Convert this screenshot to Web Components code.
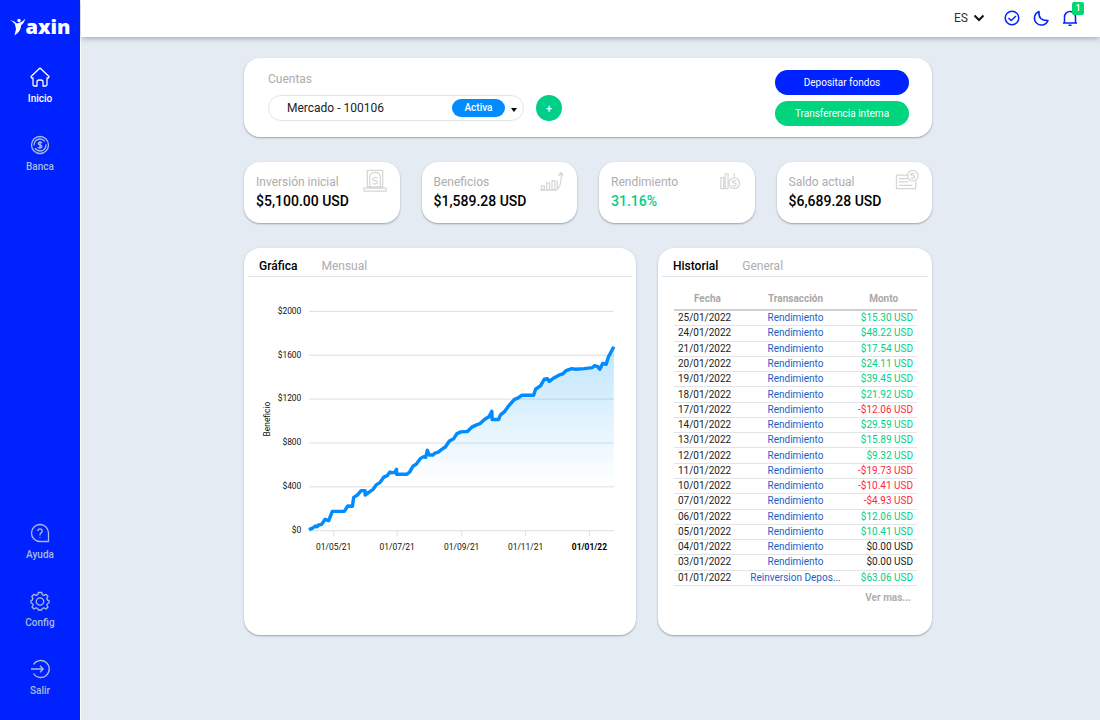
<!DOCTYPE html>
<html lang="es">
<head>
<meta charset="utf-8">
<meta name="viewport" content="width=device-width, initial-scale=1">
<title>Yaxin</title>
<style>
  :root {
    --blue: #0022ff;
    --sky: #008cff;
    --green: #00cf87;
    --red: #ff1f3c;
    --muted: #adadad;
    --line: #e2e5e8;
    --shadow: 0 1px 2px rgba(40, 50, 70, .4);
  }
  html, body { margin: 0; min-height: 100vh; }
  body { background: #e4ebf3; color: #000; font-family: Roboto, "Noto Sans", sans-serif; }
</style>
</head>
<body>
<yx-app>
  <yx-sidebar slot="side">
    <yx-nav-item icon="home" active>Inicio</yx-nav-item>
    <yx-nav-item icon="coin">Banca</yx-nav-item>
    <yx-nav-item slot="bottom" icon="help">Ayuda</yx-nav-item>
    <yx-nav-item slot="bottom" icon="gear">Config</yx-nav-item>
    <yx-nav-item slot="bottom" icon="exit">Salir</yx-nav-item>
  </yx-sidebar>
  <yx-topbar slot="top"></yx-topbar>
  <yx-account></yx-account>
  <yx-stats>
    <yx-stat label="Inversión inicial" icon="safe">$5,100.00 USD</yx-stat>
    <yx-stat label="Beneficios" icon="growth">$1,589.28 USD</yx-stat>
    <yx-stat label="Rendimiento" icon="yield" positive>31.16%</yx-stat>
    <yx-stat label="Saldo actual" icon="balance">$6,689.28 USD</yx-stat>
  </yx-stats>
  <yx-panels>
    <yx-panel tabs="Gráfica,Mensual"><yx-chart></yx-chart></yx-panel>
    <yx-panel tabs="Historial,General"><yx-history></yx-history></yx-panel>
  </yx-panels>
</yx-app>

<script>
const ICONS = {
  home: '<path d="M2 10.5 11 2l9 8.500-.6 1.500H18v6.500q0 1.500-1.500 1.500h-2.500v-4q0-2-2-2h-2q-2 0-2 2v4H5.500Q4 20 4 18.500V12H2.600z"/>',
  coin: '<circle cx="11" cy="11" r="8.500"/><circle cx="11" cy="11" r="6" stroke-dasharray="15 3"/><path d="M13 9.200Q12.600 8.200 11 8.200T9.200 9.600Q9.200 10.700 11 11t1.900 1.500Q12.800 13.900 11 13.900T9 12.800M11 7v8.200"/>',
  help: '<path d="M19.500 19.500H11A8.500 8.500 0 1 1 19.500 11z"/><path d="M8.800 9Q9 6.800 11 6.800T13.200 9Q13.200 10.200 12 11t-1 2.300M11 15v.8"/>',
  gear: '<path d="m9.300 2.500-.6 2.200-1.700.7-2-1.100L2.800 6.500l1.100 2-.7 1.700-1.200.3v2.500l1.500.5.700 1.500-1.200 2L5 19l2-1.200 1.700.7.6 1.500h3.400l.6-1.500 1.700-.7L17 19l2-2-1.200-2 .7-1.500 1.500-.5v-2.500l-1.500-.3-.7-1.700 1.100-2L17 4.300l-2 1.100-1.700-.7-.6-2.200z"/><circle cx="11" cy="11.500" r="3.700"/>',
  exit: '<path d="M4.500 6.500a8.500 8.500 0 1 1 0 9M2 11h12M11 7.800l3.200 3.200-3.200 3.200"/>',
  safe: '<path d="M4.500 20V1.500h16V20M1 20h23v3H1zM7 19V9q0-5.500 5.500-5.500T18 9v10M4 18.500h17"/><path d="M15 9.500q-2.500-1.700-4.500 0t2 2.600 2 2.900q-2 1.300-4.500 0"/>',
  growth: '<path d="M1.500 21.500v-4h3v4zM7 21.500v-7h3v7zM12.500 21.500V12h3v9.500zM0 22h17q6-4 5-18m-3 3 3-3.500L24 7M18 12v8"/>',
  yield: '<path d="M3 20.500V9h3v11.500zM7.500 20.500V5h3v15.500zM17 8V4.500"/><circle cx="17" cy="14.800" r="5.500"/><path d="M19 12.800q-2-1.300-3.500 0t1.500 2 1.300 2.200-3.500 0"/>',
  balance: '<path d="M14 6.500H1.500v14h20V13M4 10h9M4 13.500h10M4 17h14"/><circle cx="18.500" cy="7" r="5.500"/><path d="M20.500 5q-2-1.300-3.500 0t1.500 2 1.300 2.200-3.500 0"/>'
};
const svg = (name, size, box) =>
  `<svg width="${size}" height="${size}" viewBox="0 0 ${box} ${box}" fill="none" stroke="currentColor" stroke-width="1.300" stroke-linejoin="round" aria-hidden="true">${ICONS[name]}</svg>`;

/* Base element: renders view() and styles() into an open shadow root. */
class Element extends HTMLElement {
  connectedCallback() {
    if (this.shadowRoot) return;
    const t = document.createElement('template');
    t.innerHTML = `<style>:host,*{box-sizing:border-box}button,select{font:inherit;color:inherit;border:0;background:none;padding:0;margin:0;cursor:pointer}a{color:inherit;text-decoration:none}svg{display:block}${this.styles()}</style>${this.view()}`;
    this.attachShadow({ mode: 'open' }).append(t.content.cloneNode(true));
  }
}

class App extends Element {
  styles() { return `
    :host { display: grid; grid-template-columns: 81px 1fr; min-height: 100vh; }
    .page { display: flex; flex-direction: column; min-width: 0; }
    main { display: grid; gap: 25px; padding: 21px 168px 24px 163px; }
    @media (max-width: 900px) { main { padding: 21px 24px; } }`; }
  view() { return `<slot name="side"></slot><div class="page"><slot name="top"></slot><main><slot></slot></main></div>`; }
}

class Sidebar extends Element {
  styles() { return `
    :host { display: flex; flex-direction: column; background: var(--blue); border-right: 1px solid #fff; padding: 14px 0 4px; }
    .logo { display: flex; align-items: center; justify-content: center; color: #fff; font: 800 20px/26px "Open Sans", sans-serif; }
    nav { flex: 1; display: flex; flex-direction: column; padding-top: 16px; }
    .bottom { margin-top: auto; }`; }
  view() { return `
    <a class="logo" href="#" aria-label="Yaxin">
      <svg width="16" height="18" viewBox="0 0 16 18" fill="#fff" aria-hidden="true">
        <circle cx="9" cy="2.500" r="1.700"/>
        <path d="M0 2q4 .7 7 3.500Q12 4.500 15.500.7 14 5 11 7.500q.3 5.500-6.500 10L6 11Q5.500 8 4.800 6 3 3.500 0 2z"/>
      </svg>axin</a>
    <nav><slot></slot><div class="bottom"><slot name="bottom"></slot></div></nav>`; }
}

class NavItem extends Element {
  styles() { return `
    :host { display: block; color: #a9bcdc; }
    :host([active]) { color: #fff; }
    a { display: flex; flex-direction: column; align-items: center; gap: 4px; height: 68px; padding-top: 10px; font-size: 10px; line-height: 14px; font-weight: 500; }`; }
  view() { return `<a href="#">${svg(this.getAttribute('icon'), 22, 22)}<slot></slot></a>`; }
}

class Topbar extends Element {
  styles() { return `
    :host { display: block; background: #fff; box-shadow: 0 1px 6px rgba(40,50,70,.4); }
    header { display: flex; align-items: center; justify-content: flex-end; height: 37px; padding: 0 20px 2px 0; gap: 9px; color: var(--blue); }
    .lang { display: flex; align-items: center; gap: 3px; color: #333; font-size: 12px; margin-right: 8px; }
    select { appearance: none; width: 16px; line-height: 16px; }
    .bell { position: relative; }
    .badge { position: absolute; right: -4px; top: -6px; width: 12px; height: 13px; border-radius: 2px; background: #00d672; color: #fff; font: 500 9px/13px Roboto, sans-serif; text-align: center; }`; }
  view() { return `
    <header>
      <label class="lang"><select aria-label="Idioma"><option>ES</option><option>EN</option></select>
        <svg width="12" height="12" viewBox="0 0 12 12" fill="none" stroke="#111" stroke-width="2" aria-hidden="true"><path d="m1.500 3.500 4.500 4.500 4.500-4.500"/></svg></label>
      <button aria-label="Verificación"><svg width="20" height="20" viewBox="0 0 20 20" fill="none" stroke="currentColor" stroke-width="1.500"><circle cx="10" cy="10" r="6.800"/><path d="m6.500 10 2.700 2.500L14 8"/></svg></button>
      <button aria-label="Modo oscuro"><svg width="20" height="20" viewBox="0 0 20 20" fill="none" stroke="currentColor" stroke-width="1.500" stroke-linejoin="round"><path d="M8 3.500Q7 13 17 12.500A7 7 0 1 1 8 3.500z"/></svg></button>
      <button class="bell" aria-label="Notificaciones"><svg width="20" height="20" viewBox="0 0 20 20" fill="none" stroke="currentColor" stroke-width="1.500"><path d="M3 15h14M4.500 15V9a5.500 5.500 0 0 1 11 0v6M8.500 17.300h3"/></svg><span class="badge">1</span></button>
    </header>`; }
}

class Account extends Element {
  styles() { return `
    :host { display: flex; justify-content: space-between; align-items: flex-start; flex-wrap: wrap; gap: 12px; padding: 12px 23px 11px 24px; background: #fff; border-radius: 16px; box-shadow: var(--shadow); }
    .title { display: block; color: var(--muted); font-size: 12px; line-height: 18px; margin-bottom: 7px; }
    .row { display: flex; gap: 12px; align-items: center; }
    .field { display: flex; align-items: center; gap: 6px; width: 256px; height: 26px; padding: 0 6px 0 18px; border: 1px solid var(--line); border-radius: 13px; }
    select { appearance: none; flex: 1; min-width: 0; font-size: 12px; line-height: 16px; color: #222; }
    .pill { width: 53px; border-radius: 9px; background: var(--sky); color: #fff; font-size: 10px; line-height: 18px; text-align: center; font-weight: 500; }
    .caret { border: 3px solid transparent; border-top: 4px solid #000; border-bottom: 0; margin-top: 4px; }
    .add { width: 26px; height: 26px; border-radius: 50%; background: var(--green); color: #fff; font-size: 10px; font-weight: 500; }
    .actions { display: grid; gap: 6px; width: 134px; }
    .actions button { height: 25px; border-radius: 13px; background: var(--blue); color: #fff; font-size: 10px; }
    .actions button + button { background: #00d47c; }`; }
  view() { return `
    <div>
      <label class="title" for="acc">Cuentas</label>
      <div class="row">
        <div class="field"><select id="acc"><option>Mercado - 100106</option></select><span class="pill">Activa</span><span class="caret"></span></div>
        <button class="add" aria-label="Agregar cuenta">+</button>
      </div>
    </div>
    <div class="actions"><button>Depositar fondos</button><button>Transferencia interna</button></div>`; }
}

class Stats extends Element {
  styles() { return `:host { display: grid; grid-template-columns: repeat(auto-fit, minmax(140px, 1fr)); gap: 22px; }`; }
  view() { return `<slot></slot>`; }
}

class Stat extends Element {
  styles() { return `
    :host { display: flex; justify-content: space-between; min-height: 61px; padding: 7px 13px 7px 12px; background: #fff; border-radius: 16px; box-shadow: var(--shadow); }
    .text { padding-top: 4px; white-space: nowrap; }
    .label { color: var(--muted); font-size: 12px; line-height: 18px; }
    .value { font-size: 14px; line-height: 20px; font-weight: 500; }
    :host([positive]) .value { color: var(--green); }
    svg { color: #d6d6d6; }`; }
  view() { return `<div class="text"><div class="label">${this.getAttribute('label')}</div><div class="value"><slot></slot></div></div>${svg(this.getAttribute('icon'), 24, 25)}`; }
}

class Panels extends Element {
  styles() { return `
    :host { display: grid; grid-template-columns: 392fr 274fr; gap: 22px; }
    @media (max-width: 900px) { :host { grid-template-columns: 1fr; } }`; }
  view() { return `<slot></slot>`; }
}

class Panel extends Element {
  styles() { return `
    :host { display: block; min-width: 0; min-height: 387px; background: #fff; border-radius: 16px; box-shadow: var(--shadow); }
    .tabs { display: flex; gap: 24px; margin: 0 4px; padding: 8px 11px 0; height: 29px; border-bottom: 1px solid var(--line); font-size: 12px; line-height: 20px; color: var(--muted); }
    .tabs button { height: 20px; }
    [aria-selected=true] { color: #000; font-weight: 500; }`; }
  view() {
    const tabs = this.getAttribute('tabs').split(',');
    return `<div class="tabs" role="tablist">${tabs.map((t, i) => `<button role="tab" aria-selected="${i === 0}">${t}</button>`).join('')}</div><slot></slot>`;
  }
}

/* Profit over time: [position along the date axis, profit in USD] */
const PROFIT = [[207,9],[218,24],[227,43],[231,36],[236,52],[245,58],[255,103],[266,91],[277,176],[313,176],[323,225],[337,222],[341,304],[352,325],[363,365],[375,365],[375,325],[386,350],[398,374],[409,420],[419,438],[430,486],[441,502],[449,535],[454,529],[463,532],[469,559],[469,514],[500,514],[508,535],[519,590],[528,605],[540,657],[550,675],[556,669],[561,733],[567,690],[578,690],[584,708],[594,717],[603,739],[615,763],[627,818],[640,839],[649,883],[661,901],[681,904],[694,944],[708,965],[719,977],[733,1016],[746,1041],[754,1089],[755,1013],[774,1013],[780,1056],[792,1086],[802,1129],[821,1195],[833,1211],[843,1235],[879,1235],[885,1290],[900,1323],[911,1381],[920,1387],[926,1362],[938,1390],[956,1420],[966,1429],[976,1460],[993,1478],[1005,1472],[1030,1478],[1055,1487],[1061,1505],[1071,1496],[1077,1472],[1086,1526],[1096,1517],[1103,1587],[1119,1678]];

class Chart extends Element {
  styles() { return `
    :host { display: block; }
    svg { width: 100%; height: auto; }
    text { font: 11px Roboto, sans-serif; fill: #111; }
    .grid { stroke: #dcdfe1; stroke-width: 1.300; }`; }
  view() {
    const L = 85, R = 484, T = 45, B = 332;
    const x = p => L + (p - 207) / (1119 - 207) * (R - L);
    const y = v => B - v / 2000 * (B - T);
    const line = PROFIT.map(([p, v], i) => `${i ? 'L' : 'M'}${x(p).toFixed(1)} ${y(v).toFixed(1)}`).join('');
    const rows = [2000, 1600, 1200, 800, 400, 0].map(v =>
      `<path class="grid" d="M${L} ${y(v)}H${R}"/><text x="75" y="${y(v) + 3}" text-anchor="end">$${v}</text>`).join('');
    const cols = [['01/05/21', 281], ['01/07/21', 471], ['01/09/21', 664], ['01/11/21', 855], ['01/01/22', 1046]].map(([d, p], i) =>
      `<path class="grid" d="M${x(p)} ${B}v7"/><text x="${x(p)}" y="357" text-anchor="middle"${i === 4 ? ' style="font-weight:700;fill:#000"' : ''}>${d}</text>`).join('');
    return `<svg viewBox="0 0 513 420" role="img" aria-label="Beneficio por fecha">
      <defs><linearGradient id="fill" gradientUnits="userSpaceOnUse" x1="0" y1="${y(1700)}" x2="0" y2="${y(420)}"><stop offset="0" stop-color="#0099f5" stop-opacity=".26"/><stop offset="1" stop-color="#0099f5" stop-opacity="0"/></linearGradient></defs>
      ${rows}${cols}
      <path d="${line}V${B}H${L}z" fill="url(#fill)"/>
      <path d="${line}" fill="none" stroke="#008cff" stroke-width="4.500" stroke-linejoin="round"/>
      <text transform="translate(34 186) rotate(-90)" text-anchor="middle">Beneficio</text>
    </svg>`;
  }
}

const HISTORY = [['25/01/2022', 15.30], ['24/01/2022', 48.22], ['21/01/2022', 17.54], ['20/01/2022', 24.11], ['19/01/2022', 39.45], ['18/01/2022', 21.92], ['17/01/2022', -12.06], ['14/01/2022', 29.59], ['13/01/2022', 15.89], ['12/01/2022', 9.32], ['11/01/2022', -19.73], ['10/01/2022', -10.41], ['07/01/2022', -4.93], ['06/01/2022', 12.06], ['05/01/2022', 10.41], ['04/01/2022', 0], ['03/01/2022', 0], ['01/01/2022', 63.06, 'Reinversion Depos...']];

class History extends Element {
  styles() { return `
    :host { display: block; padding: 12px 15px 0 16px; font-size: 10px; line-height: 12px; }
    table { width: 100%; height: 297px; border-collapse: collapse; table-layout: fixed; }
    col:nth-child(2) { width: 45%; }
    th { height: 21px; padding: 0; color: #a8a8a8; font-weight: 700; border-bottom: 2px solid #cfcfcf; }
    td { padding: 0 4px; border-bottom: 1px solid var(--line); color: #222; white-space: nowrap; }
    td:nth-child(2) { text-align: center; color: #1c5fc4; }
    td:nth-child(3) { text-align: right; }
    td.up { color: var(--green); }
    td.down { color: var(--red); }
    .more { display: block; padding: 6px 6px 0 0; text-align: right; font-weight: 700; color: #b0b0b0; }`; }
  view() {
    const rows = HISTORY.map(([d, v, t = 'Rendimiento']) =>
      `<tr><td>${d}</td><td>${t}</td><td class="${v > 0 ? 'up' : v < 0 ? 'down' : ''}">${v < 0 ? '-' : ''}$${Math.abs(v).toFixed(2)} USD</td></tr>`).join('');
    return `<table><colgroup><col><col><col></colgroup><thead><tr><th>Fecha</th><th>Transacción</th><th>Monto</th></tr></thead><tbody>${rows}</tbody></table><a class="more" href="#">Ver mas...</a>`;
  }
}

for (const [name, cls] of Object.entries({ app: App, sidebar: Sidebar, 'nav-item': NavItem, topbar: Topbar, account: Account, stats: Stats, stat: Stat, panels: Panels, panel: Panel, chart: Chart, history: History }))
  customElements.define('yx-' + name, cls);
</script>
</body>
</html>
